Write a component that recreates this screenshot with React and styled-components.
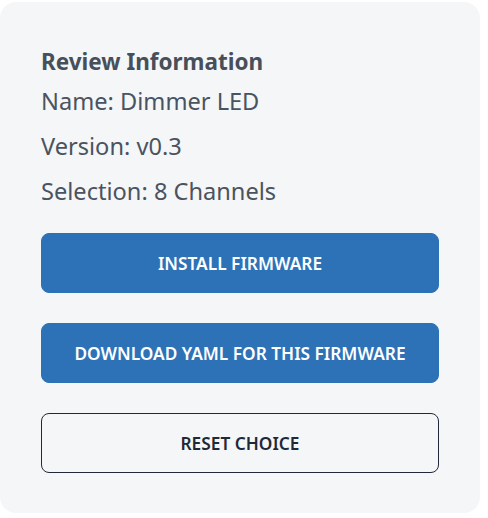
import React from 'react'
import styled, { createGlobalStyle } from 'styled-components'

const GlobalStyle = createGlobalStyle`
  html, body {
    margin: 0;
    padding: 0;
    background: #ffffff;
  }
  body {
    font-family: "Noto Sans", "Open Sans", sans-serif;
  }
`

const Page = styled.div`
  padding-top: 2px;
  width: 480px;
`

const Card = styled.section`
  background: #f5f6f8;
  border-radius: 16px;
  padding: 41px 41px 40px;
  display: flex;
  flex-direction: column;
`

const Title = styled.h2`
  margin: 0 0 4px;
  font-size: 22.5px;
  line-height: 37px;
  font-weight: 700;
  color: #464f5a;
`

const Line = styled.p`
  margin: 0 0 11px;
  font-size: 23.6px;
  line-height: 34px;
  font-weight: 400;
  color: #4a5360;
`

const Actions = styled.div`
  display: flex;
  flex-direction: column;
  gap: 30px;
  margin-top: 14px;
`

const Button = styled.button`
  height: 60px;
  width: 100%;
  border-radius: 8px;
  font-family: inherit;
  font-size: 17.3px;
  font-weight: 600;
  text-transform: uppercase;
  cursor: pointer;
  border: 1px solid ${p => (p.$outline ? '#1f2937' : '#2d72b7')};
  background: ${p => (p.$outline ? 'transparent' : '#2d72b7')};
  color: ${p => (p.$outline ? '#1f2937' : '#ffffff')};
`

const info = [
  ['Name', 'Dimmer LED'],
  ['Version', 'v0.3'],
  ['Selection', '8 Channels']
]

export default function App() {
  return (
    <Page>
      <GlobalStyle />
      <Card>
        <Title>Review Information</Title>
        {info.map(([label, value]) => (
          <Line key={label}>{label}: {value}</Line>
        ))}
        <Actions>
          <Button>Install Firmware</Button>
          <Button>Download YAML for this firmware</Button>
          <Button $outline>Reset Choice</Button>
        </Actions>
      </Card>
    </Page>
  )
}
